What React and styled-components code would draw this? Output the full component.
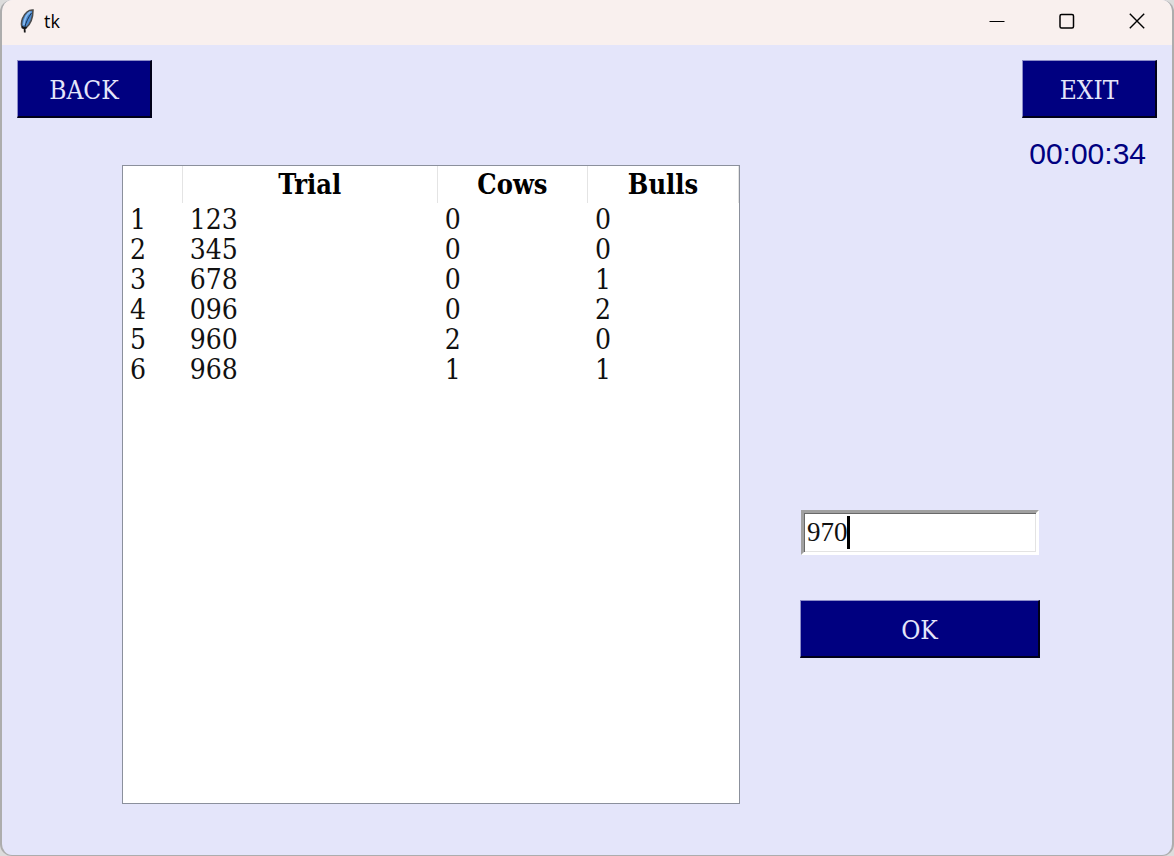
import React, { useState } from 'react';
import styled, { createGlobalStyle } from 'styled-components';

const serif = '"DejaVu Serif Condensed", "DejaVu Serif", "Liberation Serif", serif';

const GlobalStyle = createGlobalStyle`
  * { box-sizing: border-box; }
  body { margin: 0; background: #dcdcdc; }
`;

const Window = styled.div`
  display: flex;
  flex-direction: column;
  min-height: 100vh;
  overflow: hidden;
  background: #e4e5fa;
  border: solid #adadad;
  border-width: 0 2px 1px;
  border-radius: 12px;
`;

const TitleBar = styled.header`
  display: flex;
  align-items: center;
  height: 45px;
  padding: 0 12px 3px 16px;
  background: #f9f0ee;
`;

const Title = styled.h1`
  flex: 1;
  margin: 0 0 0 10px;
  font: 400 18px/24px "Open Sans", "Noto Sans", sans-serif;
  color: #000;
`;

const WindowControls = styled.div`
  display: flex;
  gap: 24px;
`;

const ControlButton = styled.button`
  display: grid;
  place-items: center;
  width: 46px;
  height: 32px;
  padding: 0;
  border: 0;
  background: transparent;
`;

const Content = styled.main`
  display: flex;
  flex: 1;
  gap: 60px;
  padding: 15px 15px 51px;
`;

const BoardColumn = styled.section`
  display: flex;
  flex: 1;
  flex-direction: column;
  align-items: flex-start;
  gap: 47px;
  min-width: 0;
`;

const SideColumn = styled.section`
  display: flex;
  flex-direction: column;
  align-items: flex-end;
  width: 357px;
`;

const ActionButton = styled.button`
  width: ${({ $wide }) => ($wide ? '240px' : '135px')};
  height: 58px;
  padding: 2px 0 0;
  border: solid;
  border-width: 1px 2px 2px 1px;
  border-color: #8c8cc8 #000018 #000018 #8c8cc8;
  background: #000080;
  color: #e4e5fa;
  font: 400 26px/32px ${serif};
`;

const Timer = styled.time`
  margin: 18px 11px 0 0;
  color: #000080;
  font: 400 30px/36px "Liberation Sans", Arial, sans-serif;
`;

const BoardFrame = styled.div`
  flex: 1;
  align-self: stretch;
  margin-left: 105px;
  border: 1px solid #8b909c;
  background: #fff;
`;

const Board = styled.table`
  width: 100%;
  table-layout: fixed;
  border-collapse: separate;
  border-spacing: 0;
  color: #111;
  font: 400 28px/30px ${serif};
`;

const Column = styled.col`
  width: ${({ $share }) => $share}%;
`;

const HeadCell = styled.th`
  height: 37px;
  padding: 0;
  border-right: 1px solid #e4e4e4;
  color: #000;
  font-size: 27px;
  font-weight: 700;
  text-align: center;
`;

const BodyRow = styled.tr`
  &:first-child td { padding-top: 2px; }
`;

const Cell = styled.td`
  padding: 0 0 0 7px;
`;

const GuessForm = styled.form`
  display: flex;
  flex-direction: column;
  align-self: flex-start;
  gap: 45px;
  width: 240px;
  margin-top: 338px;
`;

const EntryField = styled.div`
  position: relative;
  margin: 0 1px;
  font: 400 27px/36px "Liberation Serif", serif;
`;

const Entry = styled.input`
  display: block;
  width: 100%;
  height: 45px;
  padding: 0 3px;
  border: 3px solid;
  border-color: #a0a0a0 #fff #fff #a0a0a0;
  border-radius: 0;
  outline: none;
  background: #fff;
  box-shadow: inset 1px 1px #696969, inset -1px -1px #e3e3e3;
  color: #111;
  font: inherit;
  caret-color: transparent;
`;

const Caret = styled.span`
  position: absolute;
  top: 6px;
  left: calc(5px + ${({ $chars }) => $chars}ch);
  width: 3px;
  height: 33px;
  background: #000;
`;

const trials = [
  ['1', '123', '0', '0'],
  ['2', '345', '0', '0'],
  ['3', '678', '0', '1'],
  ['4', '096', '0', '2'],
  ['5', '960', '2', '0'],
  ['6', '968', '1', '1'],
];

const Feather = () => (
  <svg width="16" height="26" viewBox="0 0 16 26" aria-hidden="true">
    <path d="M15 2C11 1.500 6.500 5 4.500 10.500C3.300 14 3 17.500 4.500 20L8 20C12 16.500 15 10 15 2Z" fill="#4b8ad0" stroke="#4c4c4c" strokeWidth="1.600" />
    <path d="M12.500 3.800C9 6 6.300 11 5.800 17" fill="none" stroke="#8dbdee" strokeWidth="1.600" />
    <path d="M13.500 5C10.500 9 8 14 6.500 20" fill="none" stroke="#18314f" strokeWidth="1" />
    <path d="M4 18.500L6.500 20.500L8.500 19M6.500 19L6.800 24.500" fill="none" stroke="#161616" strokeWidth="1.800" />
  </svg>
);

const ControlIcon = ({ children }) => (
  <svg width="16" height="16" viewBox="0 0 16 16" fill="none" stroke="#000" aria-hidden="true">
    {children}
  </svg>
);

export default function App() {
  const [guess, setGuess] = useState('970');

  return (
    <>
      <GlobalStyle />
      <Window>
        <TitleBar>
          <Feather />
          <Title>tk</Title>
          <WindowControls>
            <ControlButton aria-label="Minimize">
              <ControlIcon><path d="M0.500 8.500H15.500" /></ControlIcon>
            </ControlButton>
            <ControlButton aria-label="Maximize">
              <ControlIcon><rect x="1" y="1.500" width="13.500" height="13.500" rx="1.500" strokeWidth="1.500" /></ControlIcon>
            </ControlButton>
            <ControlButton aria-label="Close">
              <ControlIcon><path d="M0.800 0.800L15.200 15.200M15.200 0.800L0.800 15.200" strokeWidth="1.400" /></ControlIcon>
            </ControlButton>
          </WindowControls>
        </TitleBar>
        <Content>
          <BoardColumn>
            <ActionButton type="button">BACK</ActionButton>
            <BoardFrame>
              <Board>
                <colgroup>
                  <Column $share={9.7} />
                  <Column $share={41.4} />
                  <Column $share={24.4} />
                  <Column $share={24.5} />
                </colgroup>
                <thead>
                  <tr>
                    <HeadCell scope="col" aria-label="Number" />
                    <HeadCell scope="col">Trial</HeadCell>
                    <HeadCell scope="col">Cows</HeadCell>
                    <HeadCell scope="col">Bulls</HeadCell>
                  </tr>
                </thead>
                <tbody>
                  {trials.map((trial) => (
                    <BodyRow key={trial[0]}>
                      {trial.map((value, index) => (
                        <Cell key={index}>{value}</Cell>
                      ))}
                    </BodyRow>
                  ))}
                </tbody>
              </Board>
            </BoardFrame>
          </BoardColumn>
          <SideColumn>
            <ActionButton type="button">EXIT</ActionButton>
            <Timer>00:00:34</Timer>
            <GuessForm onSubmit={(event) => event.preventDefault()}>
              <EntryField>
                <Entry
                  aria-label="Guess"
                  value={guess}
                  maxLength={3}
                  onChange={(event) => setGuess(event.target.value)}
                />
                <Caret $chars={guess.length} />
              </EntryField>
              <ActionButton $wide type="submit">OK</ActionButton>
            </GuessForm>
          </SideColumn>
        </Content>
      </Window>
    </>
  );
}
